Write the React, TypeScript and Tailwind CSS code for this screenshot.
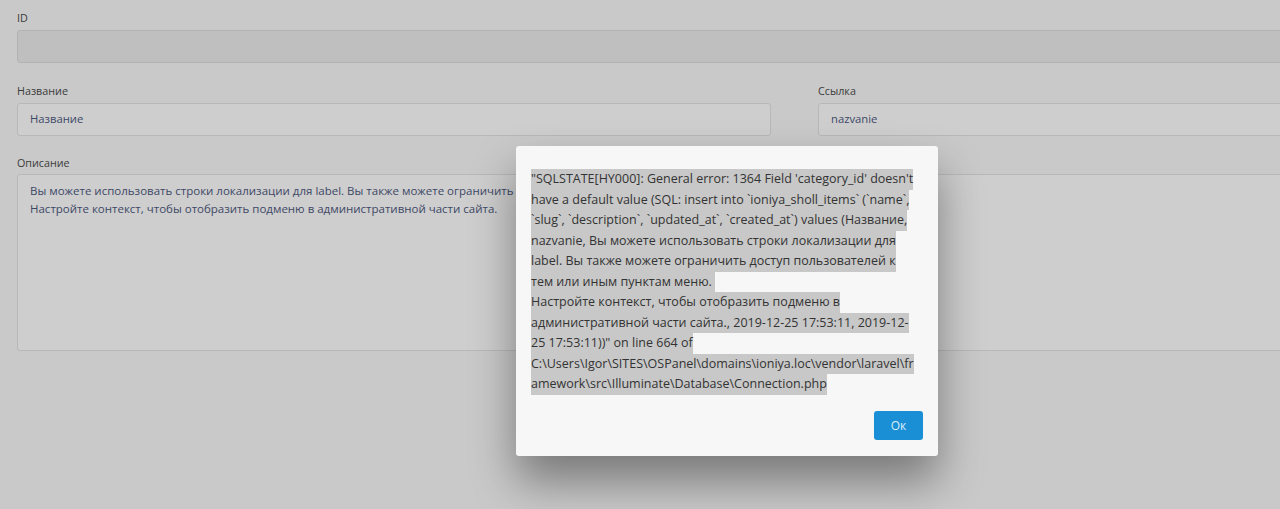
import React from "react";

const modalLines: string[] = [
  "\"SQLSTATE[HY000]: General error: 1364 Field 'category_id' doesn't",
  "have a default value (SQL: insert into `ioniya_sholl_items` (`name`,",
  "`slug`, `description`, `updated_at`, `created_at`) values (Название,",
  "nazvanie, Вы можете использовать строки локализации для",
  "label. Вы также можете ограничить доступ пользователей к",
  "тем или иным пунктам меню.\u00a0",
  "Настройте контекст, чтобы отобразить подменю в",
  "административной части сайта., 2019-12-25 17:53:11, 2019-12-",
  "25 17:53:11))\" on line 664 of",
  "C:\\Users\\Igor\\SITES\\OSPanel\\domains\\ioniya.loc\\vendor\\laravel\\fr",
  "amework\\src\\Illuminate\\Database\\Connection.php",
];

export default function App() {
  return (
    <div
      className="relative w-[1280px] h-[509px] overflow-hidden bg-[#c9c9c9]"
      style={{ fontFamily: "'Open Sans', 'Noto Sans', sans-serif" }}
    >
      <div className="w-[1330px] pl-[17px] pt-[10px] flex flex-col">
        <label className="text-[10.75px] leading-[16px] text-[#3b3b3b]">ID</label>
        <div className="mt-[4px] h-[33px] rounded-[3px] border border-[#b3b3b3] bg-[#bfbfbf]" />

        <div className="mt-[20px] grid grid-cols-[754px_754px] gap-x-[47px]">
          <div className="flex flex-col">
            <label className="text-[10.75px] leading-[16px] text-[#3b3b3b]">Название</label>
            <div className="mt-[4px] h-[33px] rounded-[3px] border border-[#b8b8b8] bg-[#cecece] flex items-center pl-[12px] text-[11.25px] text-[#3d4866]">
              Название
            </div>
          </div>
          <div className="flex flex-col">
            <label className="text-[10.75px] leading-[16px] text-[#3b3b3b]">Ссылка</label>
            <div className="mt-[4px] h-[33px] rounded-[3px] border border-[#b8b8b8] bg-[#cecece] flex items-center pl-[12px] text-[11.25px] text-[#3d4866]">
              nazvanie
            </div>
          </div>
        </div>

        <label className="mt-[19px] text-[10.75px] leading-[16px] text-[#3b3b3b]">Описание</label>
        <div className="mt-[3px] h-[177px] rounded-[3px] border border-[#b8b8b8] bg-[#cecece] pl-[12px] pt-[7px] text-[11.5px] leading-[18px] text-[#3d4866]">
          <div>Вы можете использовать строки локализации для label. Вы также можете ограничить доступ пользователей к тем или иным пунктам меню.</div>
          <div>Настройте контекст, чтобы отобразить подменю в административной части сайта.</div>
        </div>
      </div>

      <div className="absolute left-[516px] top-[146px] w-[422px] h-[310px] rounded-[3px] bg-[#f7f7f7] shadow-[0_25px_45px_rgba(0,0,0,0.4)] flex flex-col">
        <div className="pl-[15px] pt-[23px] text-[12.5px] leading-[20.5px] text-[#333333]">
          {modalLines.map((l, i) => (
            <div key={i} className="whitespace-pre h-[20.5px]">
              <span className="inline-block align-top bg-[#c8c8c8] h-[20.5px]">{l}</span>
            </div>
          ))}
        </div>
        <div className="mt-auto flex justify-end pr-[15px] pb-[16px]">
          <button className="w-[49px] h-[29px] rounded-[3px] bg-[#1b8fd6] text-[12px] text-[#dceefa]">Ок</button>
        </div>
      </div>
    </div>
  );
}
